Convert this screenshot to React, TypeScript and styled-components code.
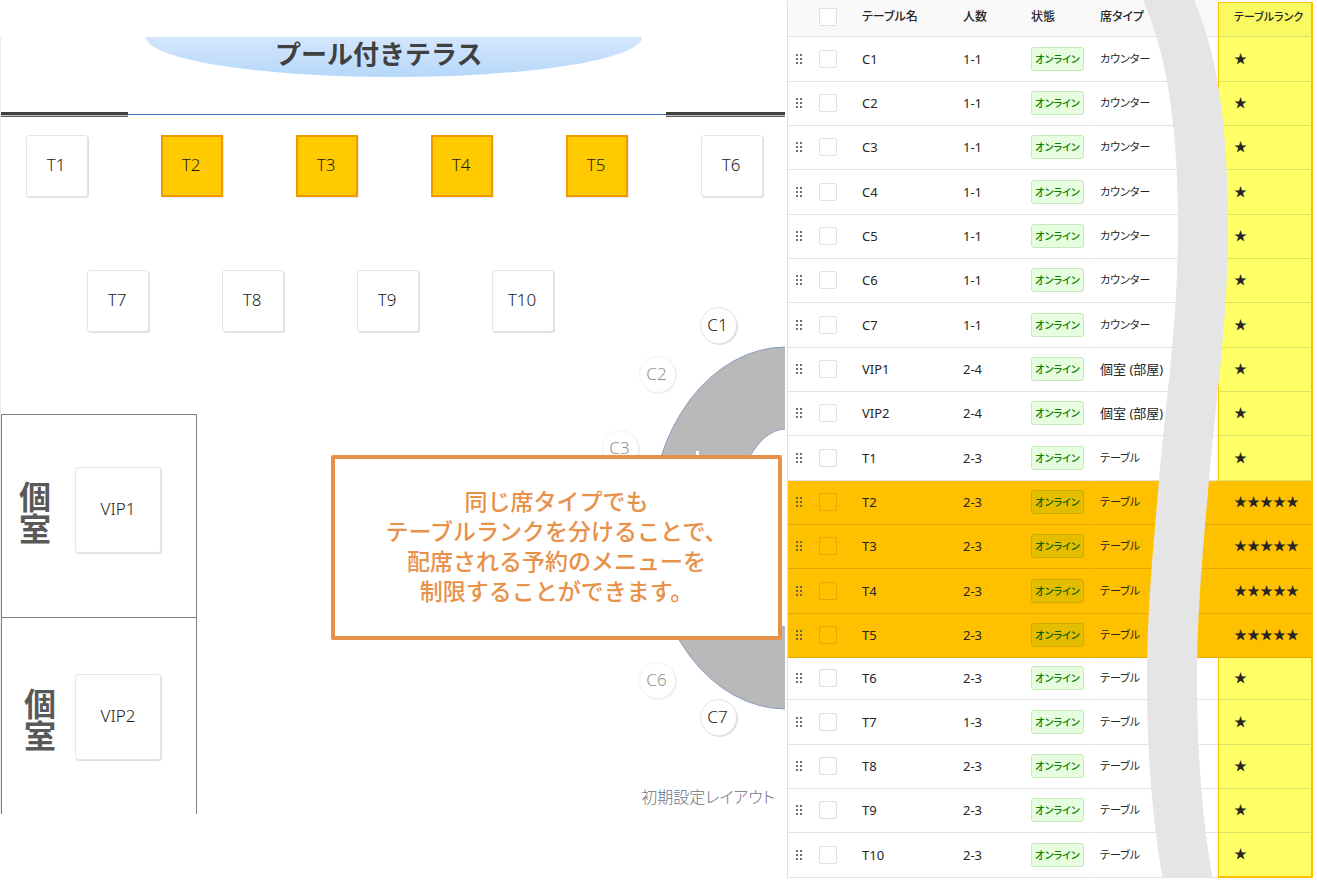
import React from "react";
import styled, { createGlobalStyle } from "styled-components";

const GlobalStyle = createGlobalStyle`
  *, *::before, *::after { box-sizing: border-box; }
  body {
    margin: 0;
    background: #fff;
    color: #262626;
    font-family: "Noto Sans", "Noto Sans CJK JP", sans-serif;
  }
`;

const Page = styled.main`
  display: flex;
  align-items: flex-start;
  padding-right: 4px;
`;

/* ---------- Floor plan ---------- */

const FloorPlan = styled.section`
  position: relative;
  display: flex;
  flex-direction: column;
  flex: 1 0 787px;
  margin-top: 37px;
  border-left: 1px solid #ededed;
`;

const Pool = styled.header`
  width: 496px;
  height: 40px;
  margin-left: 145px;
  padding-left: 129px;
  border-radius: 0 0 50% 50% / 0 0 100% 100%;
  background: linear-gradient(#d4e6fd, #b6d8fa);
`;

const PoolTitle = styled.h1`
  margin: 0;
  font-size: 26px;
  line-height: 34px;
  font-weight: 700;
  color: #404040;
  white-space: nowrap;
`;

const WallRow = styled.div`
  display: flex;
  align-items: center;
  height: 5px;
  margin: 35px 2px 0 0;
`;

const Wall = styled.div<{ $width: number }>`
  width: ${(p) => p.$width}px;
  height: 5px;
  border-bottom: 1px solid #5a5a5a;
  background: linear-gradient(#404040 3px, #c4c4c4 3px);
`;

const GlassWall = styled.div`
  flex: 1;
  height: 1px;
  background: #4472c4;
`;

const SeatRows = styled.div`
  display: flex;
  flex-direction: column;
  gap: 73px;
  padding: 18px 0 82px;
`;

const SeatRow = styled.div<{ $indent: number }>`
  display: flex;
  gap: 73px;
  padding-left: ${(p) => p.$indent}px;
`;

const Seat = styled.button`
  padding: 0 2px 4px 0;
  font: 300 17px "Noto Sans", sans-serif;
  color: #1c1c1c;
  background: #fff;
  border: 1px solid #e6e6e6;
`;

const SquareSeat = styled(Seat)<{ $ranked?: boolean }>`
  width: 62px;
  height: 62px;
  border-radius: 3px;
  box-shadow: 1px 1px 0 #dedede;
  ${(p) =>
    p.$ranked &&
    `
    border: 2px solid #f09a00;
    border-radius: 0;
    background: #ffcb00;
    box-shadow: 1px 1px 0 #ececec;
  `}
`;

const RoomSeat = styled(Seat)`
  width: 86px;
  height: 86px;
  padding-right: 0;
  border-radius: 3px;
  box-shadow: 1px 1px 0 #dedede;
`;

const RoundSeat = styled(Seat)<{ $right: number; $top: number; $faded?: boolean }>`
  position: absolute;
  right: ${(p) => p.$right}px;
  top: ${(p) => p.$top}px;
  width: 37px;
  height: 37px;
  padding-bottom: 2px;
  border-radius: 50%;
  box-shadow: 1px 1px 0 #dedede;
  opacity: ${(p) => (p.$faded ? 0.5 : 1)};
`;

const Room = styled.div<{ $height: number; $pad: number }>`
  display: flex;
  align-items: flex-start;
  width: 196px;
  height: ${(p) => p.$height}px;
  padding-top: ${(p) => p.$pad}px;
  border: 1px solid #7f7f7f;
  border-bottom: 0;
`;

const RoomLabel = styled.h2<{ $indent: number }>`
  width: 73px;
  margin: 14px 0 0;
  padding: 0 ${(p) => 41 - p.$indent}px 0 ${(p) => p.$indent}px;
  font-size: 32px;
  line-height: 32px;
  font-weight: 700;
  color: #595959;
`;

const CounterArc = styled.svg`
  position: absolute;
  right: 2px;
  top: 309px;
  display: block;
`;

const LayoutName = styled.p`
  position: absolute;
  right: 12px;
  bottom: 5px;
  margin: 0;
  font-size: 16px;
  line-height: 24px;
  font-weight: 300;
  font-feature-settings: "palt";
  color: #6c7184;
`;

const Callout = styled.aside`
  position: absolute;
  right: 5px;
  top: 418px;
  width: 451px;
  height: 185px;
  padding: 27px 0 0;
  border: 4px solid #e89149;
  border-radius: 2px;
  background: #fff;
  color: #e89149;
  font-size: 23px;
  line-height: 30px;
  font-weight: 500;
  text-align: center;
`;

/* ---------- Table list ---------- */

const ListPanel = styled.section`
  position: relative;
  flex: 0 0 526px;
  border-left: 1px solid #e0e0e0;
  border-top: 2px solid #fafafa;
`;

const List = styled.table`
  width: 100%;
  table-layout: fixed;
  border-collapse: separate;
  border-spacing: 0;
  font-size: 13px;
  line-height: 18px;
  font-feature-settings: "palt";
`;

const HeadCell = styled.th`
  height: 35px;
  padding: 0 0 5px 18px;
  border-bottom: 1px solid #e2e2e2;
  background: #f9f9f9;
  font-size: 12px;
  font-weight: 500;
  text-align: left;
  white-space: nowrap;
`;

const TypeHead = styled(HeadCell)`
  padding-left: 7px;
`;

const CheckHead = styled(HeadCell)`
  padding-left: 7px;
`;

const RankHead = styled(HeadCell)`
  padding-left: 15px;
  border: 1px solid #ffc000;
  border-right-width: 2px;
  border-bottom-color: #dede68;
  background: #f9f962;
  font-size: 11px;
`;

const Cell = styled.td`
  padding: 0 0 1px 18px;
  border-bottom: 1px solid var(--line);
  background: var(--fill);
  white-space: nowrap;
`;

const HandleCell = styled(Cell)`
  padding-left: 8px;
`;

const CheckCell = styled(Cell)`
  padding-left: 7px;
`;

const StatusCell = styled(Cell)`
  border-right: 2px solid var(--fill);
`;

const TypeCell = styled(Cell)<{ $room: boolean }>`
  padding-left: 7px;
  font-size: ${(p) => (p.$room ? 13 : 11)}px;
`;

const RankCell = styled(Cell)`
  padding-bottom: 3px;
  padding-left: 15px;
  border-left: 1px solid #ffc000;
  border-right: 2px solid #ffc000;
  border-bottom-color: var(--rank-line);
  background: var(--rank-fill);
  font-family: "Noto Sans CJK JP", sans-serif;
  font-size: 13px;
`;

const Row = styled.tr<{ $highlight?: boolean; $short?: boolean }>`
  height: ${(p) => (p.$short ? 42 : 44)}px;
  --fill: ${(p) => (p.$highlight ? "#ffc000" : "#fff")};
  --line: ${(p) => (p.$highlight ? "#e2aa00" : "#e2e2e2")};
  --rank-fill: ${(p) => (p.$highlight ? "#ffc000" : "#ffff66")};
  --rank-line: ${(p) => (p.$highlight ? "#e2aa00" : "#e0e060")};
  --badge-fill: ${(p) => (p.$highlight ? "#e5bd00" : "#e6fddf")};
  --badge-line: ${(p) => (p.$highlight ? "#cfa800" : "#c4e9bb")};
  --badge-text: ${(p) => (p.$highlight ? "#0a6000" : "#0a8000")};
  --check-line: ${(p) => (p.$highlight ? "#e2aa00" : "#e0e0e0")};

  &:nth-child(3n + 1) {
    height: 45px;
  }
  &:last-child ${RankCell} {
    border-bottom: 2px solid #ffc000;
  }
`;

const DragHandle = styled.button`
  display: block;
  width: 8px;
  height: 12px;
  padding: 0;
  border: 0;
  background: none;
  cursor: grab;
`;

const Check = styled.input`
  display: block;
  appearance: none;
  width: 18px;
  height: 18px;
  margin: 0;
  border: 1px solid var(--check-line, #e0e0e0);
  border-radius: 2px;
  background: var(--fill, #fff);
`;

const Badge = styled.span`
  display: flex;
  align-items: center;
  justify-content: center;
  width: 53px;
  height: 24px;
  border: 1px solid var(--badge-line);
  border-radius: 3px;
  background: var(--badge-fill);
  color: var(--badge-text);
  font-size: 10px;
  font-weight: 500;
`;

const TearBand = styled.svg`
  position: absolute;
  left: 355px;
  top: -2px;
  display: block;
  pointer-events: none;
`;

type Item = { name: string; count: string; type: string; rank?: number; short?: boolean };

const items: Item[] = [
  ...[1, 2, 3, 4, 5, 6, 7].map((n) => ({ name: `C${n}`, count: "1-1", type: "カウンター" })),
  { name: "VIP1", count: "2-4", type: "個室 (部屋)" },
  { name: "VIP2", count: "2-4", type: "個室 (部屋)" },
  { name: "T1", count: "2-3", type: "テーブル" },
  ...[2, 3, 4, 5].map((n) => ({ name: `T${n}`, count: "2-3", type: "テーブル", rank: 5 })),
  { name: "T6", count: "2-3", type: "テーブル", short: true },
  { name: "T7", count: "1-3", type: "テーブル" },
  { name: "T8", count: "2-3", type: "テーブル" },
  { name: "T9", count: "2-3", type: "テーブル" },
  { name: "T10", count: "2-3", type: "テーブル" },
];

const seatRows = [
  { indent: 25, seats: ["T1", "T2", "T3", "T4", "T5", "T6"] },
  { indent: 86, seats: ["T7", "T8", "T9", "T10"] },
];

const rankedSeats = items.filter((item) => item.rank === 5).map((item) => item.name);

const counterSeats = [
  { name: "C1", right: 50, top: 270 },
  { name: "C2", right: 111, top: 319, faded: true },
  { name: "C3", right: 148, top: 393, faded: true },
  { name: "C6", right: 111, top: 625, faded: true },
  { name: "C7", right: 50, top: 662 },
];

const columnWidths = [24, 32, 101, 68, 80, 125, 95];

function Grip() {
  return (
    <svg width="8" height="12" viewBox="0 0 8 12" fill="#555" aria-hidden="true">
      {[1, 5, 9].map((y) => (
        <React.Fragment key={y}>
          <rect x="0" y={y} width="2" height="2" rx="0.7" />
          <rect x="4" y={y} width="2" height="2" rx="0.7" />
        </React.Fragment>
      ))}
    </svg>
  );
}

export default function App() {
  return (
    <>
      <GlobalStyle />
      <Page>
        <FloorPlan aria-label="フロア">
          <Pool>
            <PoolTitle>プール付きテラス</PoolTitle>
          </Pool>
          <WallRow>
            <Wall $width={127} />
            <GlassWall />
            <Wall $width={119} />
          </WallRow>

          <SeatRows>
            {seatRows.map((row) => (
              <SeatRow key={row.indent} $indent={row.indent}>
                {row.seats.map((name) => (
                  <SquareSeat key={name} $ranked={rankedSeats.includes(name)}>
                    {name}
                  </SquareSeat>
                ))}
              </SeatRow>
            ))}
          </SeatRows>

          <Room $height={203} $pad={52}>
            <RoomLabel $indent={17}>個室</RoomLabel>
            <RoomSeat>VIP1</RoomSeat>
          </Room>
          <Room $height={197} $pad={56}>
            <RoomLabel $indent={22}>個室</RoomLabel>
            <RoomSeat>VIP2</RoomSeat>
          </Room>

          <CounterArc width="136" height="364" viewBox="0 0 136 364" aria-hidden="true">
            <path
              d="M137 1 A136 181 0 0 0 137 363 V281 A52 99 0 0 1 137 83 Z"
              fill="#b9b9b9"
              stroke="#8c9dc4"
            />
            <rect x="47" y="105" width="3" height="6" fill="#fff" />
          </CounterArc>

          {counterSeats.map((seat) => (
            <RoundSeat key={seat.name} $right={seat.right} $top={seat.top} $faded={seat.faded}>
              {seat.name}
            </RoundSeat>
          ))}

          <LayoutName>初期設定レイアウト</LayoutName>

          <Callout>
            同じ席タイプでも
            <br />
            テーブルランクを分けることで、
            <br />
            配席される予約のメニューを
            <br />
            制限することができます。
          </Callout>
        </FloorPlan>

        <ListPanel>
          <List>
            <colgroup>
              {columnWidths.map((w, i) => (
                <col key={i} width={w} />
              ))}
            </colgroup>
            <thead>
              <tr>
                <HeadCell />
                <CheckHead>
                  <Check type="checkbox" aria-label="すべて選択" />
                </CheckHead>
                <HeadCell>テーブル名</HeadCell>
                <HeadCell>人数</HeadCell>
                <HeadCell>状態</HeadCell>
                <TypeHead>席タイプ</TypeHead>
                <RankHead>テーブルランク</RankHead>
              </tr>
            </thead>
            <tbody>
              {items.map((item) => (
                <Row key={item.name} $highlight={item.rank === 5} $short={item.short}>
                  <HandleCell>
                    <DragHandle aria-label={`${item.name} を並べ替え`}>
                      <Grip />
                    </DragHandle>
                  </HandleCell>
                  <CheckCell>
                    <Check type="checkbox" aria-label={item.name} />
                  </CheckCell>
                  <Cell>{item.name}</Cell>
                  <Cell>{item.count}</Cell>
                  <StatusCell>
                    <Badge>オンライン</Badge>
                  </StatusCell>
                  <TypeCell $room={item.type.startsWith("個室")}>{item.type}</TypeCell>
                  <RankCell>{"★".repeat(item.rank ?? 1)}</RankCell>
                </Row>
              ))}
            </tbody>
          </List>
          <TearBand width="87" height="880" viewBox="0 0 87 880" aria-hidden="true">
            <path
              d="M0 0 C22 50 35 120 35 225 C35 320 24 390 16 480 C10 550 4 610 4 680 C4 750 9 820 20 880 H70 C59 820 54 750 54 680 C54 610 60 550 66 480 C74 390 85 320 85 225 C85 120 73 50 51 0 Z"
              fill="#e5e5e5"
            />
          </TearBand>
        </ListPanel>
      </Page>
    </>
  );
}
